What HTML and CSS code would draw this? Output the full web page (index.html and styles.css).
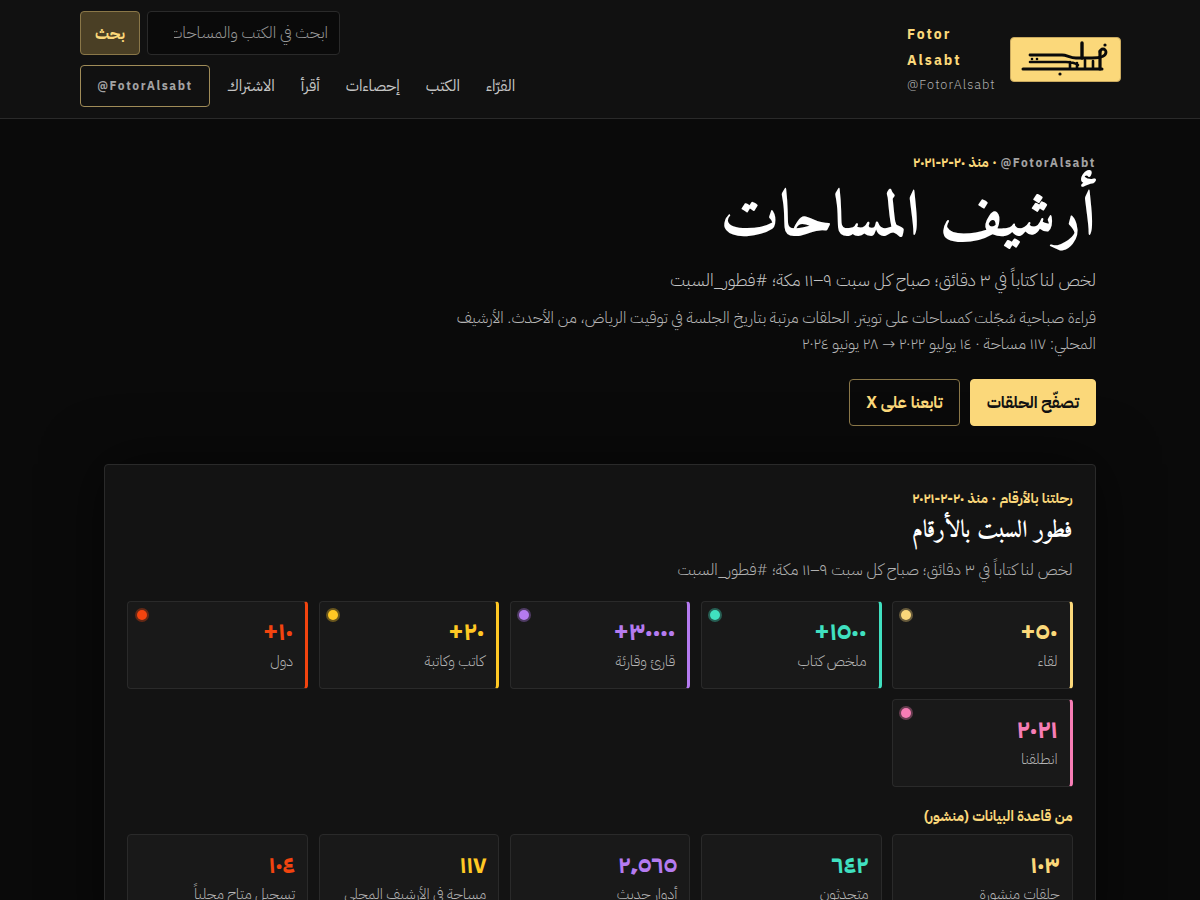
FILE: index.html
```html
<!DOCTYPE html>
<html lang="ar" dir="rtl">
<head><meta charset="utf-8"><title>أرشيف المساحات</title><link rel="stylesheet" href="styles.css"></head>
<body>
<header class="site-header">
  <div class="brand">
    <div class="logo"><svg viewBox="0 0 111 45" width="111" height="45"><g fill="none" stroke="#0a0a0a" stroke-linecap="round" stroke-linejoin="round"><path d="M13 32H92" stroke-width="3"/><path d="M90 14V32" stroke-width="3.2"/><path d="M72 6V21" stroke-width="3.4"/><path d="M20 18H52c5 0 8 3 14 3H82c7 0 14-1 14-6a3 3 0 0 0-6 0" stroke-width="2.8"/><path d="M20 25H56c6 0 9 1 12 3M60 25v6M67 26v5M75 23v8M83 24v7" stroke-width="2.6"/></g><g fill="#0a0a0a"><circle cx="95" cy="8" r="1.6"/><circle cx="50" cy="37" r="1.6"/><circle cx="22" cy="22" r="1.3"/><circle cx="27" cy="22" r="1.3"/></g></svg></div>
    <div class="brand-text"><strong class="brand-name">Fotor Alsabt</strong><span class="brand-handle">@FotorAlsabt</span></div>
  </div>
  <div class="tools">
    <form class="search"><input class="search-input" placeholder="ابحث في الكتب والمساحات"><button class="search-btn" type="button">بحث</button></form>
    <nav class="nav"><a>القرّاء</a><a>الكتب</a><a>إحصاءات</a><a>أقرأ</a><a>الاشتراك</a><a class="nav-handle">@FotorAlsabt</a></nav>
  </div>
</header>
<main class="main">
  <section class="hero">
    <p class="kicker"><span class="latin">@FotorAlsabt</span> · منذ ٢٠-٢-٢٠٢١</p>
    <h1>أرشيف المساحات</h1>
    <p class="tagline">لخص لنا كتاباً في ٣ دقائق؛ صباح كل سبت ٩–١١ مكة؛ #فطور_السبت</p>
    <p class="lead">قراءة صباحية سُجّلت كمساحات على تويتر. الحلقات مرتبة بتاريخ الجلسة في توقيت الرياض، من الأحدث. الأرشيف المحلي: ١١٧ مساحة · ١٤ يوليو ٢٠٢٢ <span class="arrow">→</span> ٢٨ يونيو ٢٠٢٤</p>
    <div class="actions"><a class="btn btn-primary">تصفّح الحلقات</a><a class="btn btn-ghost">تابعنا على X</a></div>
  </section>
  <section class="panel">
    <p class="panel-kicker">رحلتنا بالأرقام · منذ ٢٠-٢-٢٠٢١</p>
    <h2>فطور السبت بالأرقام</h2>
    <p class="panel-sub">لخص لنا كتاباً في ٣ دقائق؛ صباح كل سبت ٩–١١ مكة؛ #فطور_السبت</p>
    <div class="stats">
      <div class="stat c1"><b>٥٠+</b><span>لقاء</span></div>
      <div class="stat c2"><b>١٥٠٠+</b><span>ملخص كتاب</span></div>
      <div class="stat c3"><b>٣٠٠٠٠+</b><span>قارئ وقارئة</span></div>
      <div class="stat c4"><b>٢٠+</b><span>كاتب وكاتبة</span></div>
      <div class="stat c5"><b>١٠+</b><span>دول</span></div>
      <div class="stat c6"><b>٢٠٢١</b><span>انطلقنا</span></div>
    </div>
    <h3>من قاعدة البيانات (منشور)</h3>
    <div class="stats plain">
      <div class="stat c1"><b>١٠٣</b><span>حلقات منشورة</span></div>
      <div class="stat c2"><b>٦٤٢</b><span>متحدثون</span></div>
      <div class="stat c3"><b>٢٬٥٦٥</b><span>أدوار حديث</span></div>
      <div class="stat c4"><b>١١٧</b><span>مساحة في الأرشيف المحلي</span></div>
      <div class="stat c5"><b>١٠٤</b><span>تسجيل متاح محلياً</span></div>
    </div>
  </section>
</main>
</body>
</html>
```
FILE: styles.css
```css
* { box-sizing: border-box; }
html, body { margin: 0; }
body { background: #0a0a0a; color: #f5f5f5; font-family: "IBM Plex Sans Arabic", "Noto Sans", sans-serif; height: 900px; overflow: hidden; }
.site-header { background: #111; border-bottom: 1px solid #2a2a2a; height: 119px; padding: 0 79px 0 80px; display: flex; justify-content: space-between; align-items: flex-start; }
.brand { display: flex; align-items: center; gap: 13px; height: 118px; }
.logo { width: 111px; height: 45px; background: #fbd87a; border-radius: 4px; border: 1px solid #c9a95f; }
.logo svg { display: block; margin: -1px; }
.brand-text { width: 90px; display: flex; flex-direction: column; direction: ltr; }
.brand-name { color: #fbd87a; font-size: 14px; line-height: 26px; letter-spacing: 2px; }
.brand-handle { color: #b0b0b0; font-size: 12.8px; font-weight: 300; letter-spacing: 1px; line-height: 22px; }
.tools { display: flex; flex-direction: column; align-items: flex-end; gap: 10px; padding-top: 11px; }
.search { display: flex; gap: 7px; }
.search-input { width: 193px; height: 44px; background: #0a0a0a; border: 1px solid #2a2a2a; border-radius: 4px; padding: 0 11px 0 26px; font: inherit; font-size: 16px; font-weight: 300; color: #fff; }
.search-input::placeholder { color: #999; }
.search-btn { width: 60px; height: 44px; background: #4a3f25; border: 1px solid #8a7748; border-radius: 4px; color: #fbd87a; font: inherit; font-size: 15.5px; font-weight: 700; }
.nav { display: flex; align-items: center; gap: 26px; font-size: 15.7px; color: #c4c4c4; }
.nav-handle { direction: ltr; width: 130px; height: 42px; border: 1px solid #a08c58; border-radius: 4px; display: flex; align-items: center; justify-content: center; margin-right: -9px; font-size: 12px; font-weight: 700; letter-spacing: 1.6px; color: #a3a3a3; }
.main { width: 992px; margin: 0 auto; }
.hero { padding-top: 35px; }
.hero p { margin: 0; }
.kicker { color: #fbd87a; font-size: 14px; line-height: 18px; font-weight: 700; }
.latin { display: inline-block; direction: ltr; color: #a3a3a3; font-size: 12px; letter-spacing: 1.6px; }
h1 { margin: 7px 0 0; font-size: 64px; line-height: 82px; font-family: "Amiri", "Noto Naskh Arabic", serif; color: #fff; }
.hero .tagline { margin-top: 6px; color: #c4c4c4; font-size: 17.15px; font-weight: 300; line-height: 26px; }
.hero .lead { margin-top: 12px; width: 645px; color: #b5b5b5; font-size: 15.8px; font-weight: 300; line-height: 26px; }
.arrow { font-family: "DejaVu Sans", sans-serif; }
.actions { display: flex; gap: 10px; margin-top: 22px; }
.btn { height: 47px; padding: 0 16px; display: flex; align-items: center; border-radius: 4px; font-size: 16px; font-weight: 700; }
.btn-primary { background: #fbd87a; color: #111; border: 1px solid #fbd87a; }
.btn-ghost { border: 1px solid #8a7748; color: #fbd87a; }
.panel { margin-top: 38px; background: #131313; border: 1px solid #2a2a2a; border-radius: 4px; padding: 24.4px 22.4px 22.4px; box-shadow: 0 0 60px rgba(0,0,0,.6); }
.panel p { margin: 0; }
.panel-kicker { color: #fbd87a; font-size: 14px; font-weight: 700; line-height: 20px; }
h2 { margin: 5px 0 0; font-size: 24px; line-height: 34px; color: #fff; font-family: "Amiri", "Noto Naskh Arabic", serif; }
.panel-sub { margin-top: 11px !important; color: #b0b0b0; font-size: 15.92px; font-weight: 300; line-height: 22px; }
.stats { display: grid; grid-template-columns: repeat(5, 1fr); gap: 10.4px; margin-top: 20px; }
.stat { position: relative; height: 87.6px; background: #191919; border: 1px solid #2a2a2a; border-right: 3px solid var(--c); border-radius: 4px; padding: 15px 12px 14px; display: flex; flex-direction: column; --c: #fbd87a; }
.stat::before { content: ""; position: absolute; left: 8.5px; top: 8px; width: 10px; height: 10px; border-radius: 50%; background: var(--c); box-shadow: 0 0 0 2px color-mix(in srgb, var(--c) 35%, transparent); }
.stat b { color: var(--c); font-size: 25.6px; line-height: 30px; }
.stat span { margin-top: 3px; color: #b5b5b5; font-size: 14.6px; font-weight: 300; line-height: 22px; }
.c1 { --c: #fbd87a; } .c2 { --c: #40e0c0; } .c3 { --c: #b57bf0; } .c4 { --c: #ffc824; } .c5 { --c: #f2440f; } .c6 { --c: #f77db5; }
.plain .stat { border-right: 1px solid #2a2a2a; }
.plain .stat b { font-size: 24px; }
.plain .stat::before { display: none; }
h3 { margin: 20px 0 0; color: #fbd87a; font-size: 14.2px; line-height: 20px; font-weight: 700; }
.plain { margin-top: 7px; }
```
